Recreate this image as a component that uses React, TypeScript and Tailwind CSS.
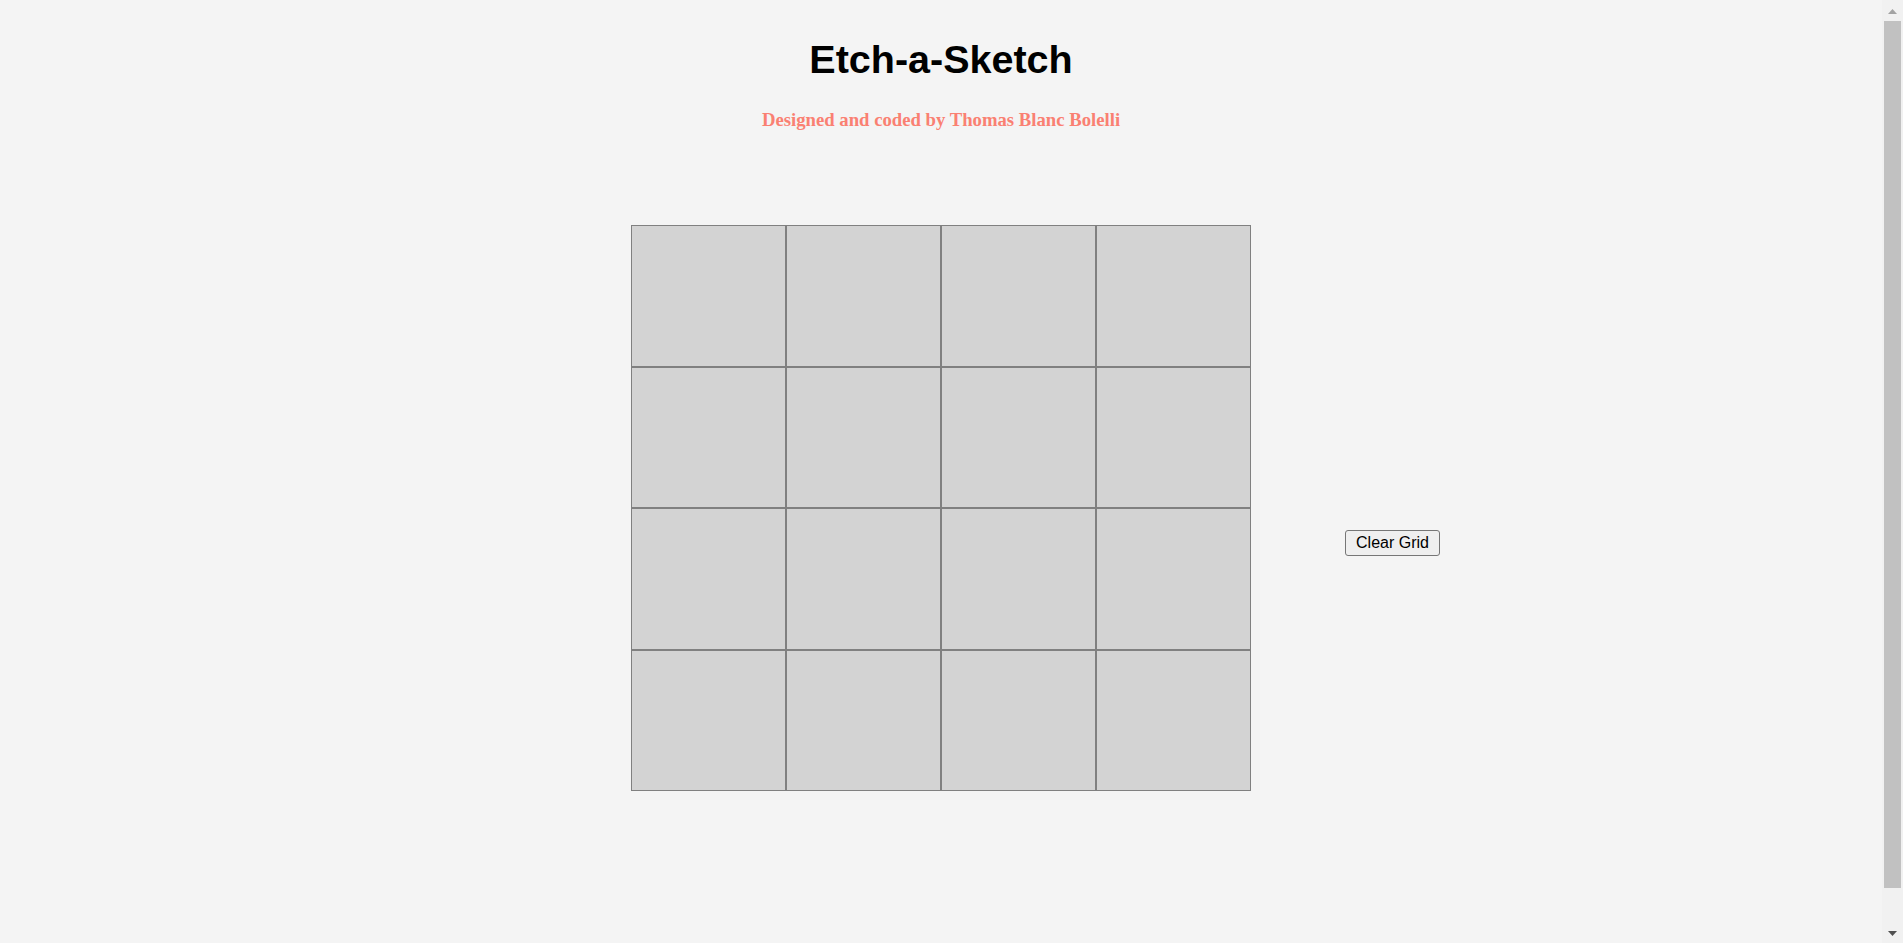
import React from "react";

export default function App() {
  const cells = Array.from({ length: 16 });
  return (
    <div className="flex h-[943px] overflow-hidden bg-[#f4f4f4]">
      <main className="min-h-[985px] flex-1">
        <h1 className="pt-[36px] text-center font-['Liberation_Sans',Arial,sans-serif] text-[39.5px] font-bold leading-[46px] text-black">
          Etch-a-Sketch
        </h1>
        <h3 className="mt-[27px] text-center font-['Liberation_Serif','Times_New_Roman',serif] text-[18.72px] font-bold leading-[22px] text-[#fa8072]">
          Designed and coded by Thomas Blanc Bolelli
        </h3>
        <div className="mt-[94px] grid grid-cols-[1fr_620px_1fr]">
          <div />
          <div className="grid h-[566px] w-[620px] grid-cols-4 grid-rows-4">
            {cells.map((_, i) => (
              <div key={i} className="border border-[#808080] bg-[#d3d3d3]" />
            ))}
          </div>
          <div className="flex items-start">
            <button className="ml-[94px] mt-[305px] flex h-[26px] w-[95px] items-center justify-center rounded-[3px] border border-[#767676] bg-[#efefef] font-['Liberation_Sans',Arial,sans-serif] text-[16px] leading-[18px] text-black">
              Clear Grid
            </button>
          </div>
        </div>
      </main>
      <div className="flex h-[943px] w-[21px] shrink-0 flex-col items-center bg-[#f1f1f1]">
        <svg width="21" height="21" viewBox="0 0 21 21" className="shrink-0">
          <polygon points="6,14 15,14 10.5,9" fill="#a3a3a3" />
        </svg>
        <div className="ml-[2px] mr-[2px] w-[17px] flex-1 bg-[#c1c1c1]" />
        <div className="h-[38px] w-full shrink-0" />
        <svg width="21" height="17" viewBox="0 0 21 17" className="shrink-0">
          <polygon points="6,5 15,5 10.5,10" fill="#505050" />
        </svg>
      </div>
    </div>
  );
}
